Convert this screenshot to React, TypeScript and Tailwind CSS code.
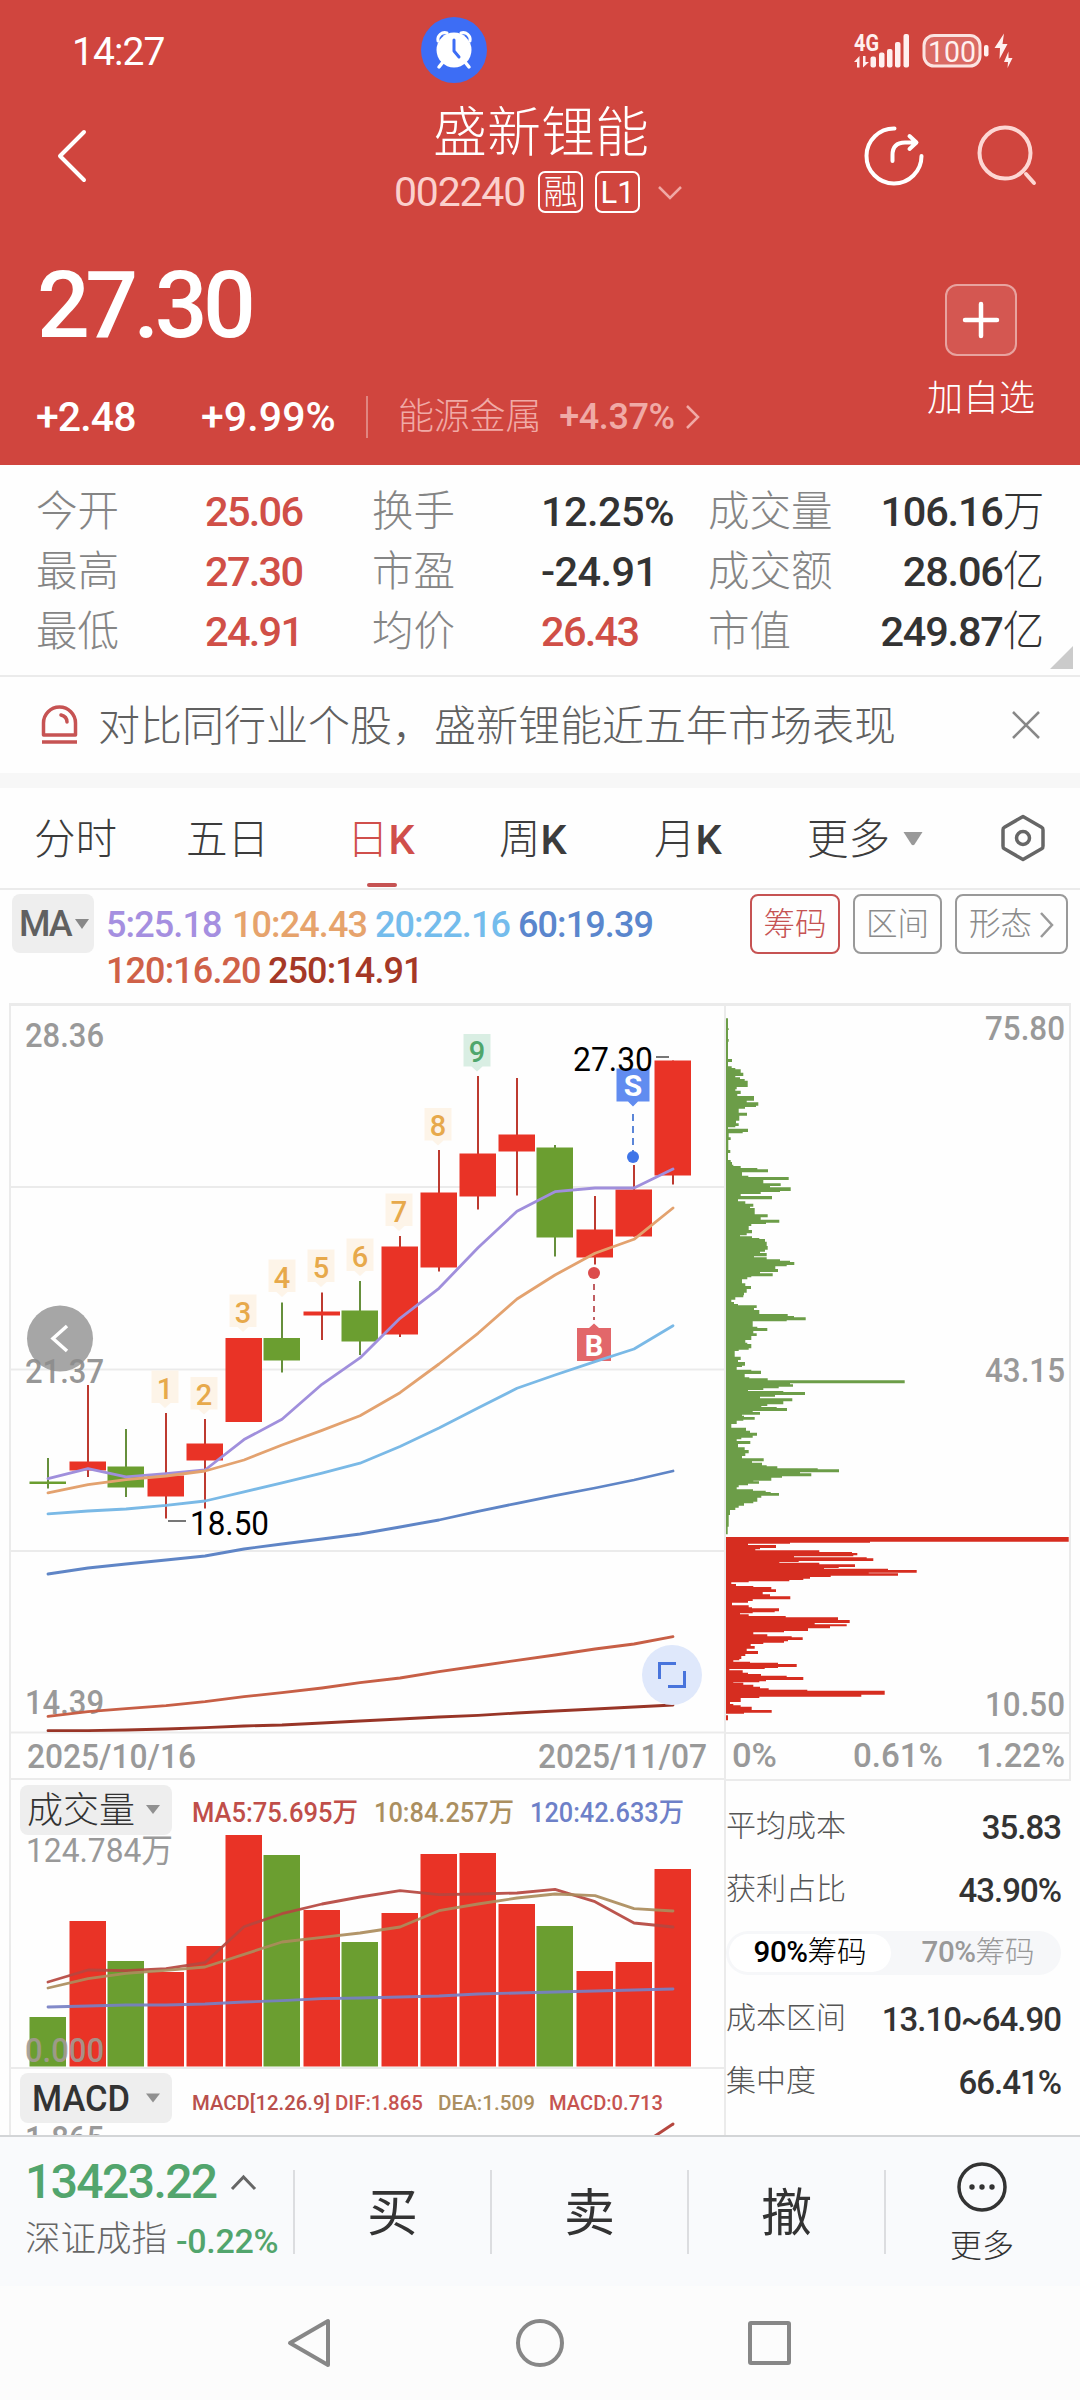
import type {ReactNode} from "react";

const RED = "#e93326";
const GREEN = "#6b9e30";

type Candle = {
    x: number;
    up: boolean;
    top: number;
    bottom: number;
    high: number;
    low: number;
};

const candles: Candle[] = [
    {x: 48, up: false, top: 1481.5, bottom: 1484, high: 1458, low: 1488.5},
    {x: 88, up: true, top: 1461.5, bottom: 1470.5, high: 1385, low: 1477},
    {x: 126, up: false, top: 1466.5, bottom: 1487.5, high: 1429, low: 1497},
    {x: 166, up: true, top: 1475.5, bottom: 1496.5, high: 1413, low: 1518.5},
    {x: 205, up: true, top: 1443.5, bottom: 1460.5, high: 1419, low: 1508.5},
    {x: 244, up: true, top: 1338, bottom: 1422, high: 1338, low: 1422},
    {x: 282, up: false, top: 1338, bottom: 1360.5, high: 1302.5, low: 1372.5},
    {x: 322, up: true, top: 1311.5, bottom: 1315.5, high: 1292.5, low: 1340},
    {x: 360, up: false, top: 1310.5, bottom: 1341.5, high: 1281, low: 1355},
    {x: 400, up: true, top: 1246.5, bottom: 1334.5, high: 1236, low: 1337},
    {x: 439, up: true, top: 1192.5, bottom: 1267.5, high: 1150, low: 1271.5},
    {x: 478, up: true, top: 1153.5, bottom: 1196.5, high: 1076, low: 1209.5},
    {x: 517, up: true, top: 1134.5, bottom: 1151.5, high: 1078, low: 1195.5},
    {x: 555, up: false, top: 1147.5, bottom: 1237.5, high: 1145, low: 1256.5},
    {x: 595, up: true, top: 1229.5, bottom: 1257.5, high: 1196, low: 1264.5},
    {x: 634, up: true, top: 1189.5, bottom: 1236.5, high: 1165, low: 1236.5},
    {x: 673, up: true, top: 1060.5, bottom: 1175.5, high: 1060.5, low: 1184.5},
];

const volumeTops = [2017, 1921, 1961, 1972, 1946, 1835, 1855, 1910, 1942, 1913, 1854, 1853, 1904, 1926, 1971, 1962, 1869];

const priceLines = [
    {color: "#a08fdc", ys: [1478.6, 1468.6, 1476.8, 1473.6, 1470, 1439.6, 1419.3, 1384.3, 1357.9, 1318.3, 1288.3, 1247.7, 1211.3, 1191.7, 1188, 1188, 1169]},
    {color: "#e3a26f", ys: [1492.9, 1484.6, 1479.6, 1476, 1471, 1460, 1445, 1430.4, 1415.7, 1392.7, 1364, 1333.3, 1299, 1275, 1253.3, 1239.3, 1208]},
    {color: "#7ab9e6", ys: [1513.9, 1511, 1509, 1505.4, 1501, 1491.8, 1482.9, 1473.2, 1463.2, 1446.5, 1428, 1408, 1388.3, 1375, 1361.7, 1349, 1325.7]},
    {color: "#5f85c6", ys: [1574, 1568, 1564, 1560, 1556, 1549, 1544, 1539, 1534, 1527, 1520, 1511.3, 1503.3, 1495.7, 1488, 1480, 1471]},
    {color: "#c75f46", ys: [1716.3, 1711.7, 1708.7, 1705.7, 1701.7, 1696.7, 1692.7, 1688, 1682.7, 1678, 1671.7, 1666, 1660.3, 1655, 1649, 1644, 1636.7]},
    {color: "#983527", ys: [1730.7, 1730.7, 1730, 1729, 1727.7, 1726, 1725, 1723, 1721, 1719, 1717, 1715.3, 1713, 1711, 1709, 1707, 1705]},
];

const volumeLines = [
    {color: "#b5473f", ys: [1982, 1970, 1970.7, 1968.7, 1962.7, 1926.7, 1913.7, 1904, 1897, 1890.7, 1894.7, 1894, 1893, 1889.3, 1901.7, 1923, 1927]},
    {color: "#ab8c5c", ys: [1988, 1978.7, 1973.3, 1970.3, 1967, 1954.3, 1942, 1937.3, 1933, 1927, 1910.7, 1904, 1898, 1894, 1895.7, 1908.7, 1911]},
    {color: "#7780c4", ys: [2007, 2006, 2005, 2005, 2004, 2002, 2000.7, 1998.7, 1998, 1997, 1996, 1994, 1993, 1992, 1991, 1990, 1989]},
];

const tags = [
    {n: "1", x: 165, y: 1370.5},
    {n: "2", x: 204, y: 1377},
    {n: "3", x: 243, y: 1294.5},
    {n: "4", x: 282, y: 1259.5},
    {n: "5", x: 321, y: 1249.5},
    {n: "6", x: 360, y: 1238.5},
    {n: "7", x: 399, y: 1193.5},
    {n: "8", x: 438, y: 1108},
    {n: "9", x: 477, y: 1034},
];

// coppie [y, larghezza] in terzi di pixel
const chipsAbove = "85:24,115:26,120:24,147:26,155:24,207:36,216:24,229:35,234:46,238:62,248:70,258:46,262:60,267:74,272:83,291:50,298:46,302:62,312:52,318:102,332:80,337:115,347:108,351:75,356:56,368:81,377:58,392:48,400:56,408:46,412:24,416:84,426:68,430:26,442:32,450:25,480:31,489:24,510:32,516:36,524:40,528:62,534:112,538:144,547:66,557:85,561:206,570:130,580:182,588:150,592:212,603:180,606:122,612:62,618:156,628:54,634:76,641:100,650:90,654:104,673:143,682:122,689:178,698:138,702:94,708:86,720:96,730:80,736:60,739:96,744:118,747:135,755:140,768:143,779:135,785:120,789:140,799:102,802:140,808:180,812:210,816:223,825:200,829:166,837:174,846:120,850:158,859:94,862:82,868:66,880:76,888:93,897:80,908:72,916:70,922:46,929:34,936:42,942:54,946:110,954:102,960:118,972:203,978:222,982:257,991:200,994:98,1010:112,1014:142,1023:100,1030:110,1038:94,1050:76,1058:82,1062:94,1075:86,1079:56,1083:44,1100:62,1110:54,1116:75,1127:66,1131:50,1139:94,1142:123,1152:74,1162:88,1165:143,1171:554,1180:210,1183:219,1190:176,1195:130,1200:84,1203:190,1206:255,1215:165,1220:120,1225:217,1234:190,1243:142,1248:124,1251:170,1254:201,1263:98,1266:120,1274:66,1277:72,1281:104,1289:70,1292:50,1302:34,1313:78,1322:90,1328:111,1337:98,1343:64,1348:50,1353:91,1362:54,1372:74,1380:86,1390:76,1398:66,1405:131,1414:96,1418:126,1426:140,1429:172,1435:293,1438:357,1447:240,1450:274,1459:186,1463:154,1472:100,1474:117,1481:84,1486:56,1492:50,1498:99,1502:137,1506:152,1509:177,1517:124,1523:112,1535:100,1540:72,1547:56,1553:46,1560:30,1575:26,1610:23,1633:18";
const chipsBelow = "1641:1046,1655:450,1658:210,1661:84,1665:168,1674:120,1678:106,1681:298,1686:396,1689:412,1696:400,1699:222,1702:440,1705:460,1713:236,1716:178,1718:298,1723:405,1731:356,1734:312,1736:504,1740:590,1748:446,1750:534,1757:332,1761:270,1766:250,1770:208,1774:86,1777:34,1782:48,1788:100,1791:154,1798:168,1806:128,1813:150,1819:211,1828:98,1833:84,1838:36,1846:86,1852:96,1855:177,1864:164,1867:98,1870:60,1873:86,1878:197,1882:354,1890:389,1899:284,1903:380,1909:330,1915:264,1923:192,1927:100,1933:142,1939:215,1942:248,1950:204,1954:192,1958:130,1962:92,1968:104,1976:80,1983:114,1992:76,1998:64,2007:58,2011:40,2015:90,2018:174,2022:230,2031:174,2034:134,2037:28,2041:68,2048:84,2052:123,2057:200,2061:250,2070:138,2074:118,2077:40,2078:70,2084:100,2090:120,2095:146,2099:262,2102:494,2114:424,2120:118,2124:62,2136:30,2142:40,2146:62,2150:95,2160:155,2168:72,2171:18,2176:24,2191:18";

function stepPath(data: string) {
    const pairs = data.split(",").map((p) => p.split(":").map(Number));
    let d = `M2 ${(pairs[0][0] / 3 - 20).toFixed(1)}`;
    pairs.forEach(([y, w]) => {
        d += `V${(y / 3 - 20).toFixed(1)}H${((w - 18) / 3 + 2).toFixed(1)}`;
    });
    return d + "H2Z";
}

function linePoints(ys: number[]) {
    return ys.map((y, i) => `${candles[i].x},${y}`).join(" ");
}

type LabelProps = {
    x: number;
    y: number;
    w?: number;
    size?: number;
    fill?: string;
    anchor?: "start" | "middle" | "end";
    weight?: number;
    children: ReactNode;
};

function Label({x, y, w, size = 33, fill = "#999999", anchor = "start", weight = 500, children}: LabelProps) {
    return (
        <text x={x} y={y} fontSize={size} fill={fill} textAnchor={anchor} fontWeight={weight}
              textLength={w} lengthAdjust="spacingAndGlyphs">
            {children}
        </text>
    );
}

function StatusBar() {
    return (
        <div className="relative flex h-[100px] items-center pl-[72px] pt-[4px] text-white">
            <span className="text-[39px] leading-none tracking-[-0.900px]">14:27</span>
            <svg className="absolute left-[421px] top-[17px]" width="66" height="66" viewBox="0 0 66 66">
                <circle cx="33" cy="33" r="33" fill="#3d6df5"/>
                <circle cx="33" cy="33" r="17.5" fill="#fff"/>
                <path d="M17 24a7 7 0 0 1 9-8M49 24a7 7 0 0 0-9-8" stroke="#fff" strokeWidth="3" fill="none" strokeLinecap="round"/>
                <path d="M22 45l-4 5M44 45l4 5" stroke="#fff" strokeWidth="3.5" strokeLinecap="round"/>
                <path d="M33 23v11l5 6" stroke="#3d6df5" strokeWidth="3" fill="none" strokeLinecap="round" strokeLinejoin="round"/>
            </svg>
            <svg className="absolute left-[850px] top-[30px]" width="170" height="42" viewBox="0 0 170 42" fill="#fff0ef">
                <text x="4" y="21" fontSize="23" fontWeight="700" textLength="25" lengthAdjust="spacingAndGlyphs">4G</text>
                <path d="M9.500 26l-5.500 6h3v5.500h2.500zM13 26v11.500l6-5.500h-3.500v-6z"/>
                <rect x="20.500" y="26.500" width="5.500" height="11" rx="2"/>
                <rect x="29" y="22.500" width="5.500" height="15" rx="2"/>
                <rect x="37" y="19" width="5.500" height="18.500" rx="2"/>
                <rect x="45" y="12" width="5.500" height="25.500" rx="2"/>
                <rect x="53.500" y="4" width="5.500" height="33.500" rx="2"/>
                <rect x="74" y="5.500" width="56" height="30.500" rx="10" fillOpacity="0.22" stroke="#fbe3e1" strokeWidth="3"/>
                <text x="78" y="31.500" fontSize="29" textLength="48" lengthAdjust="spacingAndGlyphs">100</text>
                <rect x="134" y="15" width="4.500" height="11.500" rx="2"/>
                <path d="M154 3.500l-9.500 14.500h5.500l-0.500 11 8-15h-5zM158.500 21.500l-4.500 10.500h4l-0.500 6 5-10h-4z"/>
            </svg>
        </div>
    );
}

function Header() {
    return (
        <header className="flex h-[465px] flex-col bg-[#d0453e] text-white">
            <StatusBar/>
            <div className="flex h-[120px] justify-between pl-[56px] pr-[42px]">
                <svg className="mt-[29px]" width="31" height="54" viewBox="0 0 31 54" fill="none" stroke="#fff" strokeWidth="4">
                    <path d="M28 3L4 27l24 24" strokeLinecap="round" strokeLinejoin="round"/>
                </svg>
                <div className="ml-[132px] flex flex-col items-center">
                    <h1 className="mt-[5px] text-[54px] font-light leading-[58px]">盛新锂能</h1>
                    <div className="mt-[7px] mr-[5px] flex h-[44px] items-center">
                        <span className="text-[41px] leading-none tracking-[-1.2px] text-[#fbd0cd]">002240</span>
                        <span className="ml-[13px] flex h-[42px] w-[45px] items-center justify-center rounded-[7px] border-2 text-[34px] font-light leading-none">融</span>
                        <span className="ml-[12px] flex h-[42px] w-[45px] items-center justify-center rounded-[7px] border-2 text-[31px] leading-none">L1</span>
                        <svg className="ml-[17px] mt-[2px]" width="26" height="16" viewBox="0 0 26 16" fill="none" stroke="#f0a9a5" strokeWidth="2.500">
                            <path d="M2 2l11 11L24 2"/>
                        </svg>
                    </div>
                </div>
                <div className="flex gap-[51px]">
                    <svg className="mt-[25px]" width="62" height="62" viewBox="0 0 62 62" fill="none" stroke="#fff" strokeWidth="4" strokeLinecap="round" strokeLinejoin="round">
                        <path d="M31.500 3.500A27.500 27.500 0 1 0 58.500 31"/>
                        <path d="M29.500 36V30Q29.500 17.500 42 17.500H53M46.500 11l7 6.500-7 6.500"/>
                    </svg>
                    <svg className="mt-[25px]" width="62" height="62" viewBox="0 0 62 62" fill="none" stroke="#fdd6d3" strokeWidth="4" strokeLinecap="round">
                        <circle cx="29" cy="28" r="25.500"/>
                        <path d="M50 49l8 9"/>
                    </svg>
                </div>
            </div>
            <div className="flex flex-1 justify-between pl-[36px] pr-[45px]">
                <div className="flex flex-col">
                    <div className="mt-[40px] ml-[1px] text-[93px] font-medium leading-[92px] tracking-[-4.600px]">27.30</div>
                    <div className="mt-[42px] flex h-[46px] items-center text-[41px] font-medium leading-none tracking-[-0.900px]">
                        <span className="w-[165px]">+2.48</span>
                        <span className="w-[165px] tracking-[0.1px]">+9.99%</span>
                        <span className="h-[42px] w-[2px] bg-white/35"/>
                        <span className="ml-[30px] text-[36px] font-light tracking-[-0.2px] text-[#f0aaa6]">能源金属</span>
                        <span className="ml-[18px] text-[36px] tracking-[-0.400px] text-[#f0aaa6]">+4.37%</span>
                        <svg className="ml-[10px]" width="16" height="26" viewBox="0 0 16 26" fill="none" stroke="#f0aaa6" strokeWidth="2.500">
                            <path d="M2 2l11 11L2 24"/>
                        </svg>
                    </div>
                </div>
                <div className="flex flex-col items-center pt-[64px]">
                    <div className="flex h-[72px] w-[72px] items-center justify-center rounded-[12px] border-2 border-white/45 bg-white/10">
                        <svg width="38" height="38" viewBox="0 0 38 38" stroke="#fff" strokeWidth="4.500" strokeLinecap="round">
                            <path d="M19 3v32M3 19h32"/>
                        </svg>
                    </div>
                    <span className="mt-[25px] text-[36px] font-light leading-[36px]">加自选</span>
                </div>
            </div>
        </header>
    );
}

const stats = [
    ["今开", "25.06", true, "换手", "12.25%", false, "成交量", "106.16万"],
    ["最高", "27.30", true, "市盈", "-24.91", false, "成交额", "28.06亿"],
    ["最低", "24.91", true, "均价", "26.43", true, "市值", "249.87亿"],
] as const;

function Stats() {
    return (
        <section className="relative h-[212px] border-b-2 border-[#ebebeb] pl-[36px] pr-[37px] pt-[17px]">
            {stats.map(([l1, v1, r1, l2, v2, r2, l3, v3]) => (
                <div key={l1} className="flex h-[60px] items-center text-[41.500px] leading-none tracking-[-1.7px] text-[#333]">
                    <span className="w-[169px] font-light tracking-normal text-[#858585]">{l1}</span>
                    <span className={r1 ? "w-[167px] font-medium text-[#d04f47]" : "w-[167px] font-medium"}>{v1}</span>
                    <span className="w-[169px] font-light tracking-normal text-[#858585]">{l2}</span>
                    <span className={r2 ? "w-[167px] font-medium text-[#d04f47]" : "w-[167px] font-medium tracking-[-0.6px]"}>{v2}</span>
                    <span className="font-light tracking-normal text-[#858585]">{l3}</span>
                    <span className="ml-auto font-medium tracking-[-1.2px]">
                        {v3.slice(0, -1)}<span className="font-light">{v3.slice(-1)}</span>
                    </span>
                </div>
            ))}
            <svg className="absolute bottom-[6px] right-[7px]" width="23" height="23" viewBox="0 0 23 23">
                <path d="M23 0v23H0z" fill="#cbcbcb"/>
            </svg>
        </section>
    );
}

function Notice() {
    return (
        <section className="flex h-[96px] items-center pl-[40px] pr-[40px]">
            <svg width="39" height="40" viewBox="0 0 39 40" fill="none" stroke="#c65353" strokeWidth="3.500">
                <path d="M3.500 30V18a16 16 0 0 1 32 0v12z" strokeLinejoin="round"/>
                <path d="M2 37h35"/>
                <path d="M21 10c4 1 6 4 6 7" strokeLinecap="round"/>
            </svg>
            <span className="ml-[19px] flex-1 pt-[4px] text-[42px] font-light leading-none text-[#606060]">对比同行业个股，盛新锂能近五年市场表现</span>
            <svg width="28" height="28" viewBox="0 0 28 28" stroke="#888" strokeWidth="2.500">
                <path d="M1 1l26 26M27 1L1 27"/>
            </svg>
        </section>
    );
}

function Tabs() {
    return (
        <nav className="flex h-[102px] items-center border-b-2 border-t-0 border-[#ebebeb] pl-[34px] pr-[35px] text-[41.500px] font-light leading-none text-[#3c3c3c]">
            <span className="w-[152px] pt-[3px]">分时</span>
            <span className="w-[161px] pt-[3px]">五日</span>
            <span className="relative flex h-full w-[152px] items-center pt-[3px] text-[#d04f4b]">
                日<span className="font-medium">K</span>
                <i className="absolute bottom-[1px] left-[20px] h-[4px] w-[30px] rounded-[2px] bg-[#c65353]"/>
            </span>
            <span className="w-[155px] pt-[3px]">周<span className="font-medium">K</span></span>
            <span className="w-[153px] pt-[3px]">月<span className="font-medium">K</span></span>
            <span className="pt-[3px]">更多</span>
            <svg className="ml-[12px] mt-[2px]" width="22" height="14" viewBox="0 0 22 14">
                <path d="M1.500 0h19L12.500 12.500q-1.500 1.500-3 0z" fill="#999"/>
            </svg>
            <svg className="ml-auto" width="44" height="48" viewBox="0 0 44 48" fill="none" stroke="#666" strokeWidth="3.500" strokeLinejoin="round">
                <path d="M22 2.500L41 13.500Q42 14 42 16V32Q42 34 41 34.500L22 45.500 3 34.500Q2 34 2 32V16Q2 14 3 13.500Z"/>
                <circle cx="22" cy="24" r="6.500"/>
            </svg>
        </nav>
    );
}

function Averages() {
    return (
        <section className="flex h-[113px] items-start pl-[12px] pr-[12px] pt-[4px]">
            <div className="flex h-[59px] w-[82px] items-center rounded-[8px] bg-[#eeeeee] pl-[7px] text-[36px] font-medium leading-none tracking-[-2px] text-[#606060]">
                MA
                <svg className="ml-[4px]" width="14" height="10" viewBox="0 0 14 10"><path d="M0 0h14L7 10z" fill="#888"/></svg>
            </div>
            <div className="ml-[12px] pt-[8px] text-[36px] font-medium leading-[46px] tracking-[-0.900px]">
                <div className="flex">
                    <span className="w-[126px] text-[#a58fe0]">5:25.18</span>
                    <span className="w-[143px] text-[#e6a36c]">10:24.43</span>
                    <span className="w-[143px] text-[#74bcec]">20:22.16</span>
                    <span className="text-[#5a86cd]">60:19.39</span>
                </div>
                <div className="flex">
                    <span className="w-[162px] text-[#cf6148]">120:16.20</span>
                    <span className="text-[#a53826]">250:14.91</span>
                </div>
            </div>
            <div className="ml-auto flex gap-[13px] text-[31.500px] font-light leading-none text-[#8b8b8b]">
                <div className="flex h-[60px] w-[90px] items-center justify-center rounded-[8px] border-2 border-[#c65353] pt-[2px] text-[#c65353]">筹码</div>
                <div className="flex h-[60px] w-[89px] items-center justify-center rounded-[8px] border-2 border-[#999] pt-[2px]">区间</div>
                <div className="flex h-[60px] w-[113px] items-center justify-center rounded-[8px] border-2 border-[#999] pt-[2px]">
                    形态
                    <svg className="ml-[8px]" width="14" height="26" viewBox="0 0 14 26" fill="none" stroke="#999" strokeWidth="2.500"><path d="M1 1l11 12L1 25"/></svg>
                </div>
            </div>
        </section>
    );
}

function PriceChart() {
    return (
        <svg className="block shrink-0" width="724" height="777" viewBox="0 1003 724 777">
            <path d="M9 1004.500H724" stroke="#ebebeb" strokeWidth="3"/>
            <path d="M10 1003V1780M9 1187H724M9 1369.500H724M9 1551H724M9 1732.500H724M9 1779H724" stroke="#ebebeb" strokeWidth="2"/>
            <Label x={25} y={1047} w={79}>28.36</Label>
            <Label x={25} y={1714} w={79}>14.39</Label>

            {candles.map((c) => (
                <g key={c.x} fill={c.up ? RED : GREEN}>
                    <rect x={c.x - 1} y={c.high} width="2" height={c.low - c.high} fill={c.up ? "#bd3a30" : "#668f3c"}/>
                    <rect x={c.x - 18.5} y={c.top} width="36.500" height={c.bottom - c.top}/>
                </g>
            ))}
            <path d="M577 1328h12l5-4.500 5 4.500h12v33h-34z" fill="#e2676a"/>
            <Label x={594} y={1356} size={29} fill="#fff" anchor="middle" weight={700}>B</Label>
            <path d="M594 1284v36" stroke="#c05e62" strokeWidth="2" strokeDasharray="6 5"/>
            <circle cx="594" cy="1273" r="6" fill="#dc4c4c"/>
            {priceLines.map((l) => (
                <polyline key={l.color} points={linePoints(l.ys)} fill="none" stroke={l.color} strokeWidth="2.800" strokeLinejoin="round" strokeLinecap="round"/>
            ))}

            {tags.map((t) => (
                <g key={t.n}>
                    <path d={`M${t.x - 13.5} ${t.y}h27v32.500h-8l-5.500 5-5.500-5h-8z`} fill={t.n === "9" ? "#d9eee3" : "#fdf4e8"}/>
                    <Label x={t.x} y={t.y + 28} size={29} anchor="middle" fill={t.n === "9" ? "#4fa66c" : "#e7a94b"}>{t.n}</Label>
                </g>
            ))}

            <path d="M616.500 1068.500h33v33h-11.500l-5 5-5-5h-11.500z" fill="#618cf0"/>
            <Label x={633} y={1096} size={30} fill="#fff" anchor="middle" weight={700}>S</Label>
            <path d="M633 1114v38" stroke="#5b86d8" strokeWidth="2" strokeDasharray="7 5"/>
            <circle cx="633" cy="1157" r="6" fill="#3f75e8"/>
            <path d="M656 1057h13M168 1521h18" stroke="#777" strokeWidth="2"/>
            <Label x={573} y={1071} w={80} fill="#000" weight={400}>27.30</Label>
            <Label x={190} y={1535} w={79} fill="#000" weight={400}>18.50</Label>

            <circle cx="60" cy="1338.500" r="33" fill="#a6a6a6"/>
            <path d="M67 1326l-14 12.500 14 12.500" stroke="#fff" strokeWidth="3.500" fill="none"/>
            <g opacity="0.9"><Label x={25} y={1383} w={79} fill="#8c8c8c">21.37</Label></g>

            <circle cx="672" cy="1675" r="30" fill="#dfe8fb"/>
            <path d="M676 1663.500h-16.500v15.500M668 1686.500h16.500v-15.500" stroke="#4874dc" strokeWidth="3" fill="none"/>
            <Label x={27} y={1768} w={169}>2025/10/16</Label>
            <Label x={538} y={1768} w={169}>2025/11/07</Label>
        </svg>
    );
}

function ChipsChart() {
    return (
        <svg className="block shrink-0" width="356" height="778" viewBox="0 -7 356 778" fontWeight="500">
            <g transform="translate(0 -10)">
                <path d="M0 4.500H347" stroke="#ebebeb" strokeWidth="3"/>
                <path d="M1 3V782M346 3V781M0 733H347M0 780H347" stroke="#ebebeb" strokeWidth="2"/>
            </g>
            <path d={stepPath(chipsAbove)} fill="#6c9d48"/>
            <path d={stepPath(chipsBelow)} fill="#d62d20"/>
            <g transform="translate(0 -10)">
                <Label x={261} y={40} w={80}>75.80</Label>
                <Label x={261} y={382} w={80}>43.15</Label>
                <Label x={261} y={716} w={80}>10.50</Label>
                <Label x={8} y={767} w={45}>0%</Label>
                <Label x={129} y={767} w={90}>0.61%</Label>
                <Label x={252} y={767} w={89}>1.22%</Label>
            </g>
        </svg>
    );
}

function VolumeChart() {
    return (
        <svg className="block shrink-0" width="724" height="355" viewBox="0 1780 724 355">
            <path d="M10 1780V2135M9 2068H724" stroke="#ebebeb" strokeWidth="2"/>
            <rect x="20" y="1785" width="152" height="50" rx="8" fill="#eeeeee"/>
            <Label x={27} y={1823} size={36} fill="#333" weight={300}>成交量</Label>
            <path d="M146 1805h14l-7 9z" fill="#909090"/>
            <Label x={192} y={1822} w={166} size={27} fill="#c04e49">MA5:75.695万</Label>
            <Label x={374} y={1822} w={140} size={27} fill="#ab8f60">10:84.257万</Label>
            <Label x={530} y={1822} w={154} size={27} fill="#6d80c8">120:42.633万</Label>
            <Label x={26} y={1862} w={147} weight={400}>124.784万</Label>
            {candles.map((c, i) => (
                <rect key={c.x} x={c.x - 18.5} y={volumeTops[i]} width="36.500" height={2066.5 - volumeTops[i]} fill={c.up ? RED : GREEN}/>
            ))}
            {volumeLines.map((l) => (
                <polyline key={l.color} points={linePoints(l.ys)} fill="none" stroke={l.color} strokeWidth="2.800" strokeLinejoin="round" strokeLinecap="round" opacity="0.92"/>
            ))}
            <g opacity="0.9"><Label x={25} y={2062} w={79} fill="#a39a92">0.000</Label></g>

            <rect x="20" y="2073" width="152" height="50" rx="8" fill="#eeeeee"/>
            <Label x={32} y={2111} w={98} size={36} fill="#333">MACD</Label>
            <path d="M146 2093.500h14l-7 9z" fill="#909090"/>
            <Label x={192} y={2110} w={138} size={21} fill="#b9504c">MACD[12.26.9]</Label>
            <Label x={335} y={2110} w={88} size={21} fill="#c65350">DIF:1.865</Label>
            <Label x={438} y={2110} w={97} size={21} fill="#ab8f60">DEA:1.509</Label>
            <Label x={549} y={2110} w={114} size={21} fill="#c65350">MACD:0.713</Label>
            <Label x={25} y={2150} w={79}>1.865</Label>
            <path d="M655 2136l18-12" stroke="#b5473f" strokeWidth="3" strokeLinecap="round"/>
        </svg>
    );
}

function CostRow({label, value}: {label: string; value: string}) {
    return (
        <div className="flex h-[63px] items-center justify-between leading-none">
            <span className="text-[30px] font-light text-[#555]">{label}</span>
            <span className="pt-[4px] text-[33px] font-medium tracking-[-1px] text-[#333]">{value}</span>
        </div>
    );
}

function CostPanel() {
    return (
        <div className="flex-1 border-l-2 border-[#ebebeb] pr-[19px] pt-[13px]">
            <CostRow label="平均成本" value="35.83"/>
            <CostRow label="获利占比" value="43.90%"/>
            <div className="mt-[11px] mb-[11px] flex h-[44px] items-center rounded-full bg-[#f6f7f9] pl-[3px] text-[29.500px] font-light leading-none">
                <span className="flex h-[38px] w-[162px] items-center justify-center rounded-full bg-white text-black">
                    <span className="font-medium tracking-[-0.500px]">90%</span>筹码
                </span>
                <span className="flex h-[38px] flex-1 items-center justify-center pl-[4px] text-[#999]">
                    <span className="font-medium tracking-[-0.500px]">70%</span>筹码
                </span>
            </div>
            <CostRow label="成本区间" value="13.10~64.90"/>
            <CostRow label="集中度" value="66.41%"/>
        </div>
    );
}

function TradeBar() {
    return (
        <footer className="flex h-[151px] items-center border-t-2 border-[#d3d5d7] bg-[#f9fafc] text-[#333]">
            <div className="flex h-full w-[293px] flex-col pl-[25px] pt-[21px]">
                <div className="flex h-[48px] items-center text-[48px] font-medium leading-none tracking-[-1.600px] text-[#52a56d]">
                    13423.22
                    <svg className="ml-[13px]" width="27" height="17" viewBox="0 0 27 17" fill="none" stroke="#666" strokeWidth="3"><path d="M2 15L13.500 3 25 15"/></svg>
                </div>
                <div className="mt-[14px] flex h-[40px] items-center leading-none">
                    <span className="text-[35.500px] font-light text-[#666]">深证成指</span>
                    <span className="ml-[9px] pt-[1px] text-[34px] font-medium tracking-[-0.300px] text-[#52a56d]">-0.22%</span>
                </div>
            </div>
            {["买", "卖", "撤"].map((t) => (
                <div key={t} className="flex h-[84px] w-[197px] items-center justify-center border-l-2 border-[#dcdde0] pt-[3px] text-[51px] leading-none">{t}</div>
            ))}
            <div className="flex h-[84px] flex-1 flex-col items-center justify-center border-l-2 border-[#dcdde0] pr-[2px]">
                <svg className="shrink-0" width="50" height="50" viewBox="0 0 50 50" fill="none" stroke="#333" strokeWidth="3.500">
                    <circle cx="25" cy="25" r="23"/>
                    <g fill="#333" stroke="none"><circle cx="15" cy="25" r="2.700"/><circle cx="25" cy="25" r="2.700"/><circle cx="35" cy="25" r="2.700"/></g>
                </svg>
                <span className="mt-[18px] text-[32px] font-light leading-[32px]">更多</span>
            </div>
        </footer>
    );
}

function SystemNav() {
    return (
        <div className="flex h-[114px] items-center justify-between bg-[#fcfcfc] pl-[286px] pr-[288px]">
            <svg width="46" height="52" viewBox="0 0 46 52" fill="none" stroke="#878787" strokeWidth="4" strokeLinejoin="round"><path d="M42 4v44L4 26z"/></svg>
            <svg width="50" height="50" viewBox="0 0 50 50" fill="none" stroke="#878787" strokeWidth="4"><circle cx="26" cy="25" r="22"/></svg>
            <svg width="46" height="46" viewBox="0 0 46 46" fill="none" stroke="#878787" strokeWidth="4"><rect x="4" y="3" width="39" height="40" rx="1"/></svg>
        </div>
    );
}

export default function App() {
    return (
        <div className="flex h-[2400px] w-[1080px] flex-col overflow-hidden bg-[#fefefe] font-[Roboto,'Noto_Sans_CJK_SC',sans-serif]">
            <Header/>
            <Stats/>
            <Notice/>
            <div className="h-[15px] bg-[#f7f7f7]"/>
            <Tabs/>
            <div className="h-[1245px] overflow-hidden">
                <Averages/>
                <div className="flex">
                    <div className="w-[724px]">
                        <PriceChart/>
                        <VolumeChart/>
                    </div>
                    <div className="flex w-[356px] flex-col">
                        <ChipsChart/>
                        <CostPanel/>
                    </div>
                </div>
            </div>
            <TradeBar/>
            <SystemNav/>
        </div>
    );
}
